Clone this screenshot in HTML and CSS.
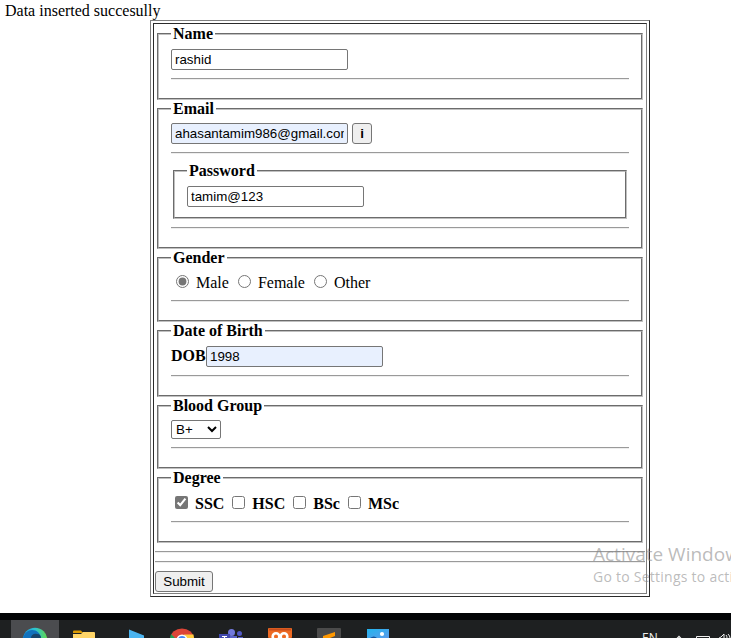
FILE: index.html
```html
<!DOCTYPE html>
<html lang="en">
<head>
<meta charset="utf-8">
<title>Registration</title>
<link rel="stylesheet" href="styles.css">
</head>
<body>
<div class="message">Data inserted succesully</div>
<div class="outer">
<form class="cell">
  <fieldset class="name">
    <legend>Name</legend>
    <div class="row"><input class="text" type="text" value="rashid"></div>
    <hr>
  </fieldset>
  <fieldset class="email">
    <legend>Email</legend>
    <div class="row tight"><input class="text filled" type="text" value="ahasantamim986@gmail.com"><button class="info" type="button">i</button></div>
    <hr>
    <fieldset class="password">
      <legend>Password</legend>
      <div class="row"><input class="text" type="text" value="tamim@123"></div>
    </fieldset>
    <hr>
  </fieldset>
  <fieldset class="gender">
    <legend>Gender</legend>
    <div class="choices radios">
      <input type="radio" name="g" checked> Male
      <input type="radio" name="g"> Female
      <input type="radio" name="g"> Other
    </div>
    <hr>
  </fieldset>
  <fieldset class="dob">
    <legend>Date of Birth</legend>
    <div class="row"><label>DOB</label><input class="text filled" type="text" value="1998"></div>
    <hr>
  </fieldset>
  <fieldset class="blood">
    <legend>Blood Group</legend>
    <div class="row tight"><select><option>B+</option></select></div>
    <hr>
  </fieldset>
  <fieldset class="degree">
    <legend>Degree</legend>
    <div class="choices checks">
      <input type="checkbox" checked> SSC
      <input type="checkbox"> HSC
      <input type="checkbox"> BSc
      <input type="checkbox"> MSc
    </div>
    <hr>
  </fieldset>
  <hr>
  <hr>
  <button class="submit" type="button">Submit</button>
</form>
</div>
<div class="watermark">
  <div class="wm-title">Activate Windows</div>
  <div class="wm-sub">Go to Settings to activate Windows.</div>
</div>
<footer class="taskbar">
  <svg width="731" height="18" viewBox="0 620 731 18">
    <defs>
      <linearGradient id="edge" x1="0" x2="1"><stop offset="0" stop-color="#1b9de0"/><stop offset=".5" stop-color="#2cc3d0"/><stop offset="1" stop-color="#62d84e"/></linearGradient>
      <linearGradient id="photo" x1="0" x2="1" y2="1"><stop offset="0" stop-color="#22b4ee"/><stop offset="1" stop-color="#5a9bea"/></linearGradient>
    </defs>
    <rect x="11" y="620" width="48" height="18" fill="#4b4c4f"/>
    <circle cx="35" cy="640" r="12.3" fill="url(#edge)"/>
    <path d="M23 638c1-5 5-8 9-8 5 0 8 3 9 8z" fill="#1272bd"/>
    <path d="M31 638c0-3 3-5 6-4 3 0 4 2 4 4z" fill="#17456c"/>
    <path d="M73 633v-1.500q0-1 1-1h7l2 2.500z" fill="#dc9a00"/>
    <path d="M73 634h8l2-2h11q1 0 1 1v5H73z" fill="#ffd567"/>
    <path d="M129 629.500l15 6v2.500h-15z" fill="#4bb4f0"/>
    <path d="M170.500 638a11.500 9.500 0 0 1 23 0z" fill="#dc4437"/>
    <path d="M171 634l4 4h-5z" fill="#219b55"/>
    <path d="M184 634.500h9.500l.5 3.500h-9z" fill="#ffcd40"/>
    <circle cx="182" cy="640" r="5.500" fill="#fff"/><circle cx="182" cy="640" r="4" fill="#4285f4"/>
    <circle cx="231.500" cy="632.500" r="3.500" fill="#7279dc"/><circle cx="239.500" cy="633.500" r="2.500" fill="#5158c4"/>
    <path d="M224 636h13v2h-13zM238 637h5v1h-5z" fill="#5960c6"/>
    <rect x="219" y="634" width="11" height="4" fill="#4048ae"/>
    <path d="M222 636.500h5M224.500 636v2" stroke="#fff" stroke-width="1.200"/>
    <rect x="268" y="628" width="24" height="10" rx="1" fill="#ed6a23"/>
    <path d="M269 629.500h22" stroke="#c84d1d" stroke-width="2"/>
    <circle cx="276" cy="636.500" r="3.300" fill="none" stroke="#fff" stroke-width="2.600"/>
    <circle cx="284" cy="636.500" r="3.300" fill="none" stroke="#fff" stroke-width="2.600"/>
    <rect x="317" y="628" width="24" height="10" rx="1" fill="#4b4b4b"/>
    <path d="M323 636l12-4v4l-5 2h-7z" fill="#ff9800"/>
    <rect x="367" y="629" width="22" height="9" fill="url(#photo)"/>
    <circle cx="382" cy="634" r="2.100" fill="#fff"/>
    <path d="M370 638q4-3 7 0z" fill="#12539a"/>
    <path d="M675.500 640l3.500-3.500 3.500 3.500" fill="none" stroke="#eee" stroke-width="1.300"/>
    <path d="M696.500 638v-1.500h13v1.500" fill="none" stroke="#eee"/>
    <path d="M719 638l2-1 3-3v4M726 635q1 1 1 3M728 634q2 2 2 4" fill="none" stroke="#eee"/>
  </svg>
  <span class="lang">EN</span>
</footer>
</body>
</html>
```
FILE: styles.css
```css
* { box-sizing: border-box; }
html, body { height: 100%; }
body {
  margin: 0;
  display: flex;
  flex-direction: column;
  overflow: hidden;
  background: #fff;
  color: #000;
  font: 16px/18px "Liberation Serif", serif;
}
.message { height: 20px; padding: 2px 0 0 5px; }
.outer {
  width: 500px;
  height: 577px;
  margin-left: 150px;
  padding: 2px;
  border: 1px solid;
  border-color: #808080 #2b2b2b #2b2b2b #808080;
}
.cell {
  height: 571px;
  padding: 1px;
  border: 1px solid;
  border-color: #2b2b2b #808080 #808080 #2b2b2b;
}
fieldset {
  margin: 0 2px;
  padding: 0 12px;
  border: 2px groove #c0c0c0;
}
legend { height: 18px; padding: 0 2px; font-weight: bold; }
.name, .dob { height: 75px; }
.email { height: 149px; }
.password { height: 57px; }
.gender { height: 73px; }
.blood { height: 72px; }
.degree { height: 74px; }
hr {
  height: 2px;
  margin: 8px 0;
  border: 0;
  border-top: 1px solid #9a9a9a;
  border-bottom: 1px solid #eee;
}
.row { display: flex; padding-top: 6px; }
.tight { padding-top: 5px; }
.row label { width: 35px; padding-top: 1px; font-weight: bold; }
input, select, button { font: 13.333px "Liberation Sans", sans-serif; color: #000; }
.text {
  width: 177px;
  height: 21px;
  padding: 1px 3px;
  border: 1px solid #767676;
  border-radius: 2px;
  background: #fff;
}
.filled { background: #e8f0fe; }
button {
  height: 21px;
  padding: 0;
  border: 1px solid #767676;
  border-radius: 3px;
  background: #efefef;
}
.info { width: 20px; margin-left: 4px; font-weight: bold; }
.submit { display: block; width: 58px; }
select {
  width: 50px;
  height: 19px;
  border: 1px solid #767676;
  border-radius: 2px;
  background-color: #fff;
}
.choices { height: 25px; padding-top: 5px; }
.choices input { accent-color: #767676; }
.checks { height: 26px; padding-top: 6px; font-weight: bold; }
.watermark {
  position: absolute;
  left: 593px;
  top: 543px;
  width: 138px;
  overflow: hidden;
  white-space: nowrap;
  color: rgba(130, 130, 130, .55);
  font-family: "Open Sans", sans-serif;
}
.wm-title { font-size: 19px; line-height: 22px; }
.wm-sub { font-size: 14px; line-height: 23px; letter-spacing: .25px; }
.taskbar {
  position: relative;
  height: 25px;
  margin-top: auto;
  border-top: 7px solid #030406;
  background: #1e2021;
  overflow: hidden;
}
.taskbar svg { display: block; }
.lang {
  position: absolute;
  left: 642px;
  top: 11px;
  color: #eee;
  font: 12px/14px "Open Sans", sans-serif;
}
```
